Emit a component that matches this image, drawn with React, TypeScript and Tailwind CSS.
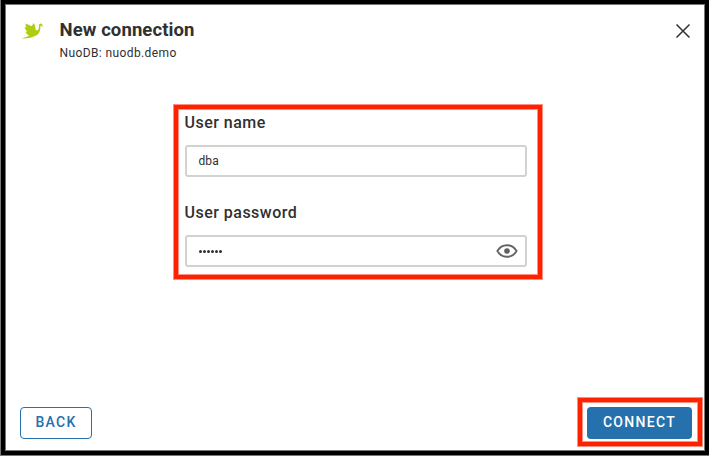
import React from "react";

function BirdLogo() {
  return (
    <svg className="h-[18px] w-6" viewBox="0 0 24 18" fill="#b0cc12" aria-hidden="true">
      <path d="M4.6 2.4 L10.8 5.2 L12.6 2 C13.9 4 14.6 6.6 14.7 9.2 L16.6 9.2 C18 8.2 17.8 6.4 17.9 4.8 C18 3.2 18.8 2.4 19.8 2.4 C21 2.4 21.4 3.8 22.3 5.8 L20 4.5 C19.2 5 19.6 6.6 19.2 8.4 C18.6 11.8 16.8 14.1 13.8 15 C11.6 16.3 9.4 16.8 7 17 L0.8 17.7 L3.4 16.4 L8.4 14.8 C6.4 14 5 12.4 4.6 10.6 L6.6 10.7 C5 9.4 3.9 7.8 3.7 6 L5.4 6.6 C4.7 5.2 4.5 3.9 4.6 2.4Z" />
    </svg>
  );
}

function CloseIcon() {
  return (
    <svg className="h-4 w-4" viewBox="0 0 16 16" fill="none" stroke="#303030" strokeWidth="1.5" aria-hidden="true">
      <path d="M1.5 1.5 14.5 14.5 M14.5 1.5 1.5 14.5" />
    </svg>
  );
}

function EyeIcon() {
  return (
    <svg className="h-4 w-[22px]" viewBox="0 0 22 16" fill="none" aria-hidden="true">
      <path d="M1.4 8 C3.6 4.2 7 2.2 11 2.2 C15 2.2 18.4 4.2 20.6 8 C18.4 11.8 15 13.8 11 13.8 C7 13.8 3.6 11.8 1.4 8Z" stroke="#646464" strokeWidth="1.9" />
      <circle cx="11" cy="8" r="2.8" fill="#606060" />
    </svg>
  );
}

function Field({ label, children }: { label: string; children: React.ReactNode }) {
  return (
    <div className="h-[90px]">
      <div className="-ml-[0.5px] flex h-8 items-start text-base leading-5 font-medium tracking-[0.48px]">{label}</div>
      <div className="flex h-8 w-[342px] items-center justify-between rounded-[3px] border-2 border-[#d2d2d2] pr-[7px] pl-[11.5px] text-xs tracking-[0.1px]">
        {children}
      </div>
    </div>
  );
}

export default function App() {
  return (
    <div className="h-[456px] w-[709px] overflow-hidden border-b border-l border-[#777777] bg-white font-['Roboto','Liberation_Sans',sans-serif] text-[#303030]">
      <div className="h-full border-4 border-black">
        <div className="flex h-full flex-col border border-[#777777]">
          <header className="flex h-[99px] justify-between pr-[13px] pl-[15px]">
            <div className="flex">
              <div className="w-[38px] pt-4">
                <BirdLogo />
              </div>
              <div className="pt-[14px]">
                <h1 className="pl-[0.5px] text-[18.5px] leading-[22px] font-bold tracking-[0.1px]">New connection</h1>
                <p className="mt-1 pl-[0.5px] text-xs leading-4 tracking-[0.39px]">NuoDB: nuodb.demo</p>
              </div>
            </div>
            <button className="h-4 pt-[18px]" aria-label="Close">
              <CloseIcon />
            </button>
          </header>
          <main className="ml-[167px] h-[176px] w-[370px] shrink-0 border border-[#ff9080]">
            <div className="h-full border-4 border-[#ff2200]">
              <div className="h-full border border-[#ff9080] pt-[3px] pl-[6px]">
                <Field label="User name">dba</Field>
                <Field label="User password">
                  <span className="flex gap-px pl-[0.5px]">
                    {[0, 1, 2, 3, 4, 5].map((i) => (
                      <i key={i} className="h-[3px] w-[3px] rounded-full bg-[#303030]" />
                    ))}
                  </span>
                  <EyeIcon />
                </Field>
              </div>
            </div>
          </main>
          <footer className="mt-auto flex items-end justify-between pr-px pb-[3px] pl-[14px]">
            <button className="mb-2 h-8 w-[72px] rounded border border-[#2571ad] pb-[2px] text-sm font-medium tracking-[1.3px] text-[#2571ad]">BACK</button>
            <div className="border border-[#ff9080]">
              <div className="border-4 border-[#ff2200]">
                <div className="border border-[#ff9080] pt-1 pr-[5px] pb-[2px] pl-1">
                  <button className="block h-8 w-[105px] rounded bg-[#2571ad] pb-[2px] text-sm font-medium tracking-[1.3px] text-white">CONNECT</button>
                </div>
              </div>
            </div>
          </footer>
        </div>
      </div>
    </div>
  );
}
